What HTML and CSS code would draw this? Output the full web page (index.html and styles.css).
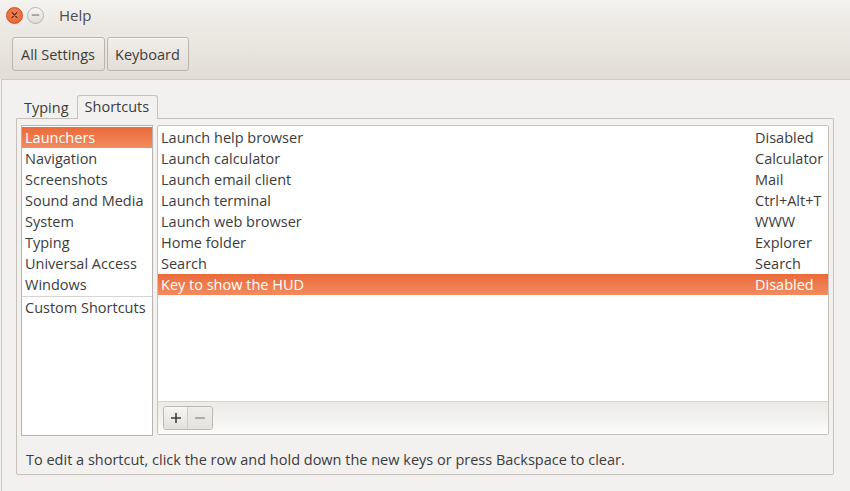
FILE: index.html
```html
<!DOCTYPE html>
<html>
<head>
<meta charset="utf-8">
<link rel="stylesheet" href="styles.css">
</head>
<body>
<div class="window">
  <div class="titlebar">
    <span class="wbtn close">
      <svg width="16" height="16" viewBox="0 0 16 16"><path d="M5.5 5.5 L10.5 10.5 M10.5 5.5 L5.5 10.5" stroke="#4a2a1a" stroke-width="1.3" stroke-linecap="round"/></svg>
    </span>
    <span class="wbtn mini">
      <svg width="16" height="16" viewBox="0 0 16 16"><path d="M4.5 8 L11.5 8" stroke="#6a6560" stroke-width="1.3" stroke-linecap="round"/></svg>
    </span>
    <span class="title">Help</span>
  </div>
  <div class="toolbar">
    <button class="tbtn wide">All Settings</button>
    <button class="tbtn">Keyboard</button>
  </div>
  <div class="frame">
    <div class="tabs">
      <div class="tab">Typing</div>
      <div class="tab active">Shortcuts</div>
    </div>
    <div class="page">
      <div class="lists">
        <div class="catlist">
          <div class="row sel">Launchers</div>
          <div class="row">Navigation</div>
          <div class="row">Screenshots</div>
          <div class="row">Sound and Media</div>
          <div class="row">System</div>
          <div class="row">Typing</div>
          <div class="row">Universal Access</div>
          <div class="row">Windows</div>
          <div class="sep"></div>
          <div class="row">Custom Shortcuts</div>
        </div>
        <div class="shortcuts">
          <div class="scroll">
            <div class="srow"><span>Launch help browser</span><span class="val">Disabled</span></div>
            <div class="srow"><span>Launch calculator</span><span class="val">Calculator</span></div>
            <div class="srow"><span>Launch email client</span><span class="val">Mail</span></div>
            <div class="srow"><span>Launch terminal</span><span class="val">Ctrl+Alt+T</span></div>
            <div class="srow"><span>Launch web browser</span><span class="val">WWW</span></div>
            <div class="srow"><span>Home folder</span><span class="val">Explorer</span></div>
            <div class="srow"><span>Search</span><span class="val">Search</span></div>
            <div class="srow sel"><span>Key to show the HUD</span><span class="val">Disabled</span></div>
          </div>
          <div class="ltoolbar">
            <div class="pm">
              <span class="pmb plus"><svg width="12" height="12" viewBox="0 0 12 12"><path d="M1 6 H11 M6 1 V11" stroke="#3c3c3c" stroke-width="1.6"/></svg></span>
              <span class="pmb minus"><svg width="12" height="12" viewBox="0 0 12 12"><path d="M1 6 H11" stroke="#9a9a9a" stroke-width="1.6"/></svg></span>
            </div>
          </div>
        </div>
      </div>
      <div class="status">To edit a shortcut, click the row and hold down the new keys or press Backspace to clear.</div>
    </div>
  </div>
</div>
</body>
</html>
```

FILE: styles.css
```css
* { box-sizing: border-box; }
html, body { margin: 0; padding: 0; }
body {
  width: 850px;
  height: 491px;
  overflow: hidden;
  background: #f2f1f0;
  font-family: "Open Sans", "DejaVu Sans", sans-serif;
  font-size: 14.5px;
  color: #3c3c3c;
}
.window { width: 850px; height: 491px; display: flex; flex-direction: column; }
.titlebar {
  height: 30px;
  display: flex;
  align-items: center;
  padding-left: 6px;
  background: linear-gradient(#f4f2ee, #ebe8e3);
}
.wbtn {
  width: 17px; height: 17px;
  border-radius: 50%;
  display: flex; align-items: center; justify-content: center;
  margin-right: 4px;
}
.wbtn svg { width: 16px; height: 16px; }
.close {
  background: radial-gradient(circle at 50% 40%, #f58a5e, #e4582a);
  border: 1px solid #c9532b;
}
.mini {
  background: linear-gradient(#f8f7f5, #dedad4);
  border: 1px solid #b9b3ab;
}
.title { margin-left: 11px; font-size: 15px; color: #4c4c4c; }
.toolbar {
  height: 49px;
  display: flex;
  align-items: flex-start;
  padding: 7px 0 0 12px;
  gap: 2px;
  background: linear-gradient(#ece9e4, #e2ddd6);
}
.tbtn {
  font: inherit;
  font-size: 14.5px;
  color: #3c3c3c;
  height: 34px;
  padding: 0 8px 0 7px;
  border: 1px solid #bdb5ab;
  border-radius: 3px;
  background: linear-gradient(#f1eee9, #e3ded6);
  box-shadow: inset 0 1px 0 #faf8f5;
}
.tbtn.wide { padding: 0 9px 0 8px; }
.frame {
  flex: 1;
  margin-left: 1px;
  border-top: 1px solid #cfcac4;
  border-left: 1px solid #cfcac4;
  background: #f2f1f0;
  padding: 15px 15px 0 14px;
  display: flex;
  flex-direction: column;
}
.tabs { display: flex; height: 23px; padding-left: 2px; gap: 2px; align-items: flex-end; }
.tab {
  padding: 0 6px;
  height: 21px;
  line-height: 21px;
}
.tab.active {
  padding: 0 8px 0 7px;
  height: 24px;
  line-height: 22px;
  border: 1px solid #c6c1bb;
  border-bottom: none;
  border-radius: 3px 3px 0 0;
  background: #f2f1f0;
  margin-bottom: -1px;
  position: relative;
  z-index: 1;
}
.page {
  width: 818px;
  height: 357px;
  border: 1px solid #c6c1bb;
  border-radius: 0 0 2px 2px;
  padding: 6px 4px 0 4px;
  display: flex;
  flex-direction: column;
}
.lists { display: flex; gap: 4px; height: 311px; }
.catlist {
  width: 132px;
  height: 311px;
  background: #fff;
  border: 1px solid #b8b3ad;
  padding-top: 1px;
}
.row {
  height: 21px;
  line-height: 21px;
  padding-left: 3px;
  white-space: nowrap;
}
.row.sel, .srow.sel {
  background: linear-gradient(#ea6a3a, #f38b5f);
  color: #fff;
}
.sep { height: 1px; background: #d8d5d1; margin: 1px 0 0 0; }
.shortcuts {
  flex: 1;
  height: 310px;
  border: 1px solid #c6c1bb;
  border-radius: 2px;
  display: flex;
  flex-direction: column;
  background: #fff;
}
.scroll { flex: 1; padding-top: 1px; }
.srow {
  height: 21px;
  line-height: 21px;
  display: flex;
  justify-content: space-between;
  padding-left: 3px;
  white-space: nowrap;
}
.srow .val { width: 73px; }
.ltoolbar {
  height: 33px;
  border-top: 1px solid #d6d2cd;
  background: linear-gradient(#eceae7, #fbfbfa);
  padding: 4px 0 0 5px;
}
.pm {
  display: inline-flex;
  height: 24px;
  border: 1px solid #bdb8b2;
  border-radius: 3px;
  overflow: hidden;
}
.pmb { width: 24px; display: flex; align-items: center; justify-content: center; }
.plus { background: linear-gradient(#f7f6f4, #e3e0dc); border-right: 1px solid #d0ccc7; }
.minus { background: linear-gradient(#eeedeb, #e4e2df); }
.status {
  padding-left: 5px;
  margin-top: 13px;
  line-height: 21px;
  white-space: nowrap;
}
```
